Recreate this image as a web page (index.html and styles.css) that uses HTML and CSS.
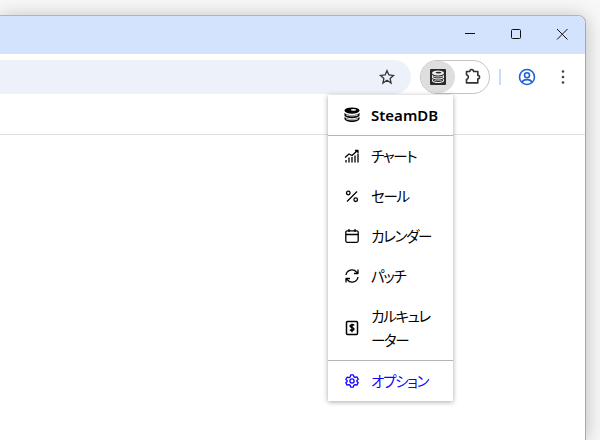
FILE: index.html
```html
<!DOCTYPE html>
<html lang="ja">
<head>
<meta charset="utf-8">
<title>SteamDB</title>
<link rel="stylesheet" href="styles.css">
</head>
<body>
<div class="window">
  <div class="titlebar">
    <svg class="winbtn" viewBox="0 0 46 40"><path d="M18 18.500h10" /></svg>
    <svg class="winbtn" viewBox="0 0 46 40"><rect x="18.500" y="14.500" width="9" height="9" rx="1" /></svg>
    <svg class="winbtn" viewBox="0 0 46 40"><path d="M18 14l10.500 10.500M28.500 14L18 24.500" /></svg>
  </div>
  <div class="toolbar">
    <div class="omnibox">
      <svg class="star" viewBox="0 0 16 16"><path d="M8 1.700l1.900 4.200 4.600.5-3.400 3.100.950 4.500L8 11.200l-4.050 2.800.950-4.500L1.500 6.400l4.600-.5z" /></svg>
    </div>
    <div class="pill">
      <span class="pill-active">
        <svg class="ext" viewBox="0 0 16 16">
          <rect width="16" height="16" rx="1" fill="#2a2a2a" />
          <ellipse cx="8" cy="4" rx="6" ry="2.600" fill="#eee" />
          <ellipse cx="8.500" cy="3.600" rx="3" ry=".9" fill="#2a2a2a" />
          <path d="M2 5.800c1.200 2.400 10.800 2.400 12 0v3c-1.200 2.400-10.800 2.400-12 0z" fill="#eee" />
          <path d="M2 9.800c1.200 2.400 10.800 2.400 12 0v2.200c-1.200 2.800-10.800 2.800-12 0z" fill="#eee" />
          <path d="M3 7.800c2 1.500 8 1.500 10 0M3 11.400c2 1.500 8 1.500 10 0" fill="none" stroke="#2a2a2a" />
        </svg>
      </span>
      <svg class="puzzle" viewBox="0 0 18 18"><path d="M2.500 3.500h3.300c-.4-2.600 4.200-2.600 3.800 0h4.200v3.900c2.300-.3 2.300 3.800 0 3.500v4H2.500v-3.700c2.400.3 2.400-4.500 0-4.200z" /></svg>
    </div>
    <span class="divider"></span>
    <svg class="profile" viewBox="0 0 18 18">
      <circle cx="9" cy="9" r="7.500" />
      <circle cx="9" cy="7.200" r="2.500" />
      <path d="M4.200 14.200c1.200-3.500 8.400-3.500 9.600 0" />
    </svg>
    <svg class="kebab" viewBox="0 0 4 16"><circle cx="2" cy="2.500" r="1.300" /><circle cx="2" cy="8" r="1.300" /><circle cx="2" cy="13.500" r="1.300" /></svg>
  </div>
  <div class="content"></div>

  <nav class="menu">
    <div class="menu-head">
      <svg class="icon big" viewBox="0 0 16 16">
        <ellipse cx="8" cy="3.600" rx="7.500" ry="3.200" fill="#000" />
        <ellipse cx="9.500" cy="2.900" rx="2.800" ry=".8" fill="#fff" />
        <path d="M.500 5.800c1.500 3.200 13.500 3.200 15 0v3c-1.500 3.200-13.500 3.200-15 0z" fill="#000" />
        <path d="M.500 9.800c1.500 3.200 13.500 3.200 15 0V12c-1.500 4-13.500 4-15 0z" fill="#000" />
        <path d="M2 7.900c3 1.500 9 1.500 12 0M2 11.800c3 1.500 9 1.500 12 0" fill="none" stroke="#fff" stroke-width=".9" />
      </svg>
      <span>SteamDB</span>
    </div>
    <a class="item">
      <svg class="icon" viewBox="0 0 16 16"><path d="M2 14.500v-2.500M5 14.500v-5M8 14.500V9M11 14.500v-7M14 14.500V5.500M1 9.500l4-3.500 3 1.500L13.500 2.500M11 2.500h3V5" /></svg>
      <span>チャート</span>
    </a>
    <a class="item">
      <svg class="icon" viewBox="0 0 16 16"><circle cx="4.300" cy="5" r="1.800" /><circle cx="11.700" cy="11.700" r="1.800" /><path d="M13 3.500L3 13.500" /></svg>
      <span>セール</span>
    </a>
    <a class="item">
      <svg class="icon" viewBox="0 0 16 16"><rect x="1.800" y="2.800" width="12.400" height="11.500" rx="1.500" /><path d="M1.800 6.500h12.400M5 1v3M11 1v3" /></svg>
      <span>カレンダー</span>
    </a>
    <a class="item">
      <svg class="icon" viewBox="0 0 16 16"><path d="M2 7a6 6 0 0 1 10.500-3l1.500 1.500M14 1.500v4h-4M14 9a6 6 0 0 1-10.500 3L2 10.500M2 14.500v-4h4" /></svg>
      <span>パッチ</span>
    </a>
    <a class="item">
      <svg class="icon dollar" viewBox="0 0 16 16"><rect x="2.500" y="1.500" width="11" height="13" rx="1" /><path d="M10 5.500c-.5-1.200-4-1.300-4 .6 0 2 4 1 4 3 0 1.800-3.500 1.700-4 .5M8 3.700v8.600" /></svg>
      <span>カルキュレーター</span>
    </a>
    <a class="item options">
      <svg class="icon" viewBox="0 0 16 16"><path d="M6.700 1.800h2.600l.5 1.800 1.300.8 1.800-.5 1.300 2.300-1.300 1.300v1l1.300 1.300-1.300 2.300-1.800-.5-1.300.8-.5 1.800H6.700l-.5-1.800-1.300-.8-1.800.5-1.300-2.300 1.300-1.300v-1L1.800 6.500l1.300-2.300 1.800.5 1.300-.8z" /><circle cx="8" cy="8" r="2.100" /></svg>
      <span>オプション</span>
    </a>
  </nav>
</div>
</body>
</html>
```

FILE: styles.css
```css
* { box-sizing: border-box; }
html, body { height: 100%; }
body {
  margin: 0;
  padding-top: 15px;
  overflow: hidden;
  background: #f8f8f8;
}
.window {
  position: relative;
  width: 586px;
  height: 425px;
  display: flex;
  flex-direction: column;
  background: #fff;
  border-top: 1px solid #b4b4b4;
  border-right: 1px solid #a8a8a8;
  border-top-right-radius: 8px;
  box-shadow: 0 2px 20px rgba(0, 0, 0, .25);
  font-family: "Noto Sans CJK JP", "Noto Sans", sans-serif;
}
.titlebar {
  height: 38px;
  background: #d3e3fd;
  border-top-right-radius: 8px;
  display: flex;
  justify-content: flex-end;
  flex: none;
}
.winbtn {
  width: 46px;
  height: 40px;
  fill: none;
  stroke: #111;
  stroke-width: 1;
  margin-top: -1px;
}
.toolbar {
  height: 81px;
  flex: none;
  background: #fff;
  border-top-right-radius: 8px;
  border-bottom: 1px solid #e0e0e0;
  padding: 6px 0 0 0;
  display: flex;
  align-items: flex-start;
}
.omnibox {
  width: 411px;
  height: 34px;
  background: #edf2fa;
  border-radius: 0 17px 17px 0;
  display: flex;
  align-items: center;
  justify-content: flex-end;
  padding-right: 16px;
  flex: none;
}
.star {
  width: 16px;
  height: 16px;
  fill: none;
  stroke: #333;
  stroke-width: 1.300;
}
.pill {
  margin: 0 0 0 9px;
  width: 70px;
  height: 34px;
  border: 1px solid #c4c4c4;
  border-radius: 17px;
  display: flex;
  align-items: center;
  flex: none;
}
.pill-active {
  width: 34px;
  height: 32px;
  border-radius: 16px;
  background: #dedede;
  display: flex;
  align-items: center;
  justify-content: center;
  flex: none;
}
.ext { width: 16px; height: 16px; }
.puzzle {
  width: 18px;
  height: 18px;
  margin-left: 9px;
  fill: none;
  stroke: #333;
  stroke-width: 1.600;
  stroke-linejoin: round;
}
.divider {
  width: 2px;
  height: 16px;
  margin: 9px 0 0 9px;
  background: #c9dcf7;
  flex: none;
}
.profile {
  width: 18px;
  height: 18px;
  margin: 8px 0 0 17px;
  fill: none;
  stroke: #1f63d0;
  stroke-width: 1.600;
  flex: none;
}
.kebab {
  width: 4px;
  height: 16px;
  margin: 9px 0 0 25px;
  fill: #444;
  flex: none;
}
.content { flex: 1; background: #fff; }
.menu {
  position: absolute;
  left: 328px;
  top: 79px;
  width: 125px;
  background: #fff;
  box-shadow: 0 1px 5px rgba(0, 0, 0, .35);
  display: flex;
  flex-direction: column;
  color: #000;
  font-size: 14.500px;
  line-height: 24px;
}
.menu-head {
  height: 41px;
  border-bottom: 1px solid #b5b5b5;
  display: flex;
  align-items: center;
  gap: 11px;
  padding-left: 16px;
  font-family: "Noto Sans", sans-serif;
  font-weight: 600;
  font-size: 15px;
}
.item {
  display: flex;
  align-items: center;
  gap: 11px;
  padding: 8px 20px 8px 16px;
}
.item span {
  min-width: 0;
  flex: 1;
  letter-spacing: -1.300px;
  font-feature-settings: "palt";
}
.options {
  border-top: 1px solid #b5b5b5;
  color: #1500ff;
}
.icon {
  width: 16px;
  height: 16px;
  flex: none;
  fill: none;
  stroke: currentColor;
  stroke-width: 1.300;
  stroke-linejoin: round;
}
.dollar { stroke-width: 1.500; }
.icon.big { stroke: none; }
```
